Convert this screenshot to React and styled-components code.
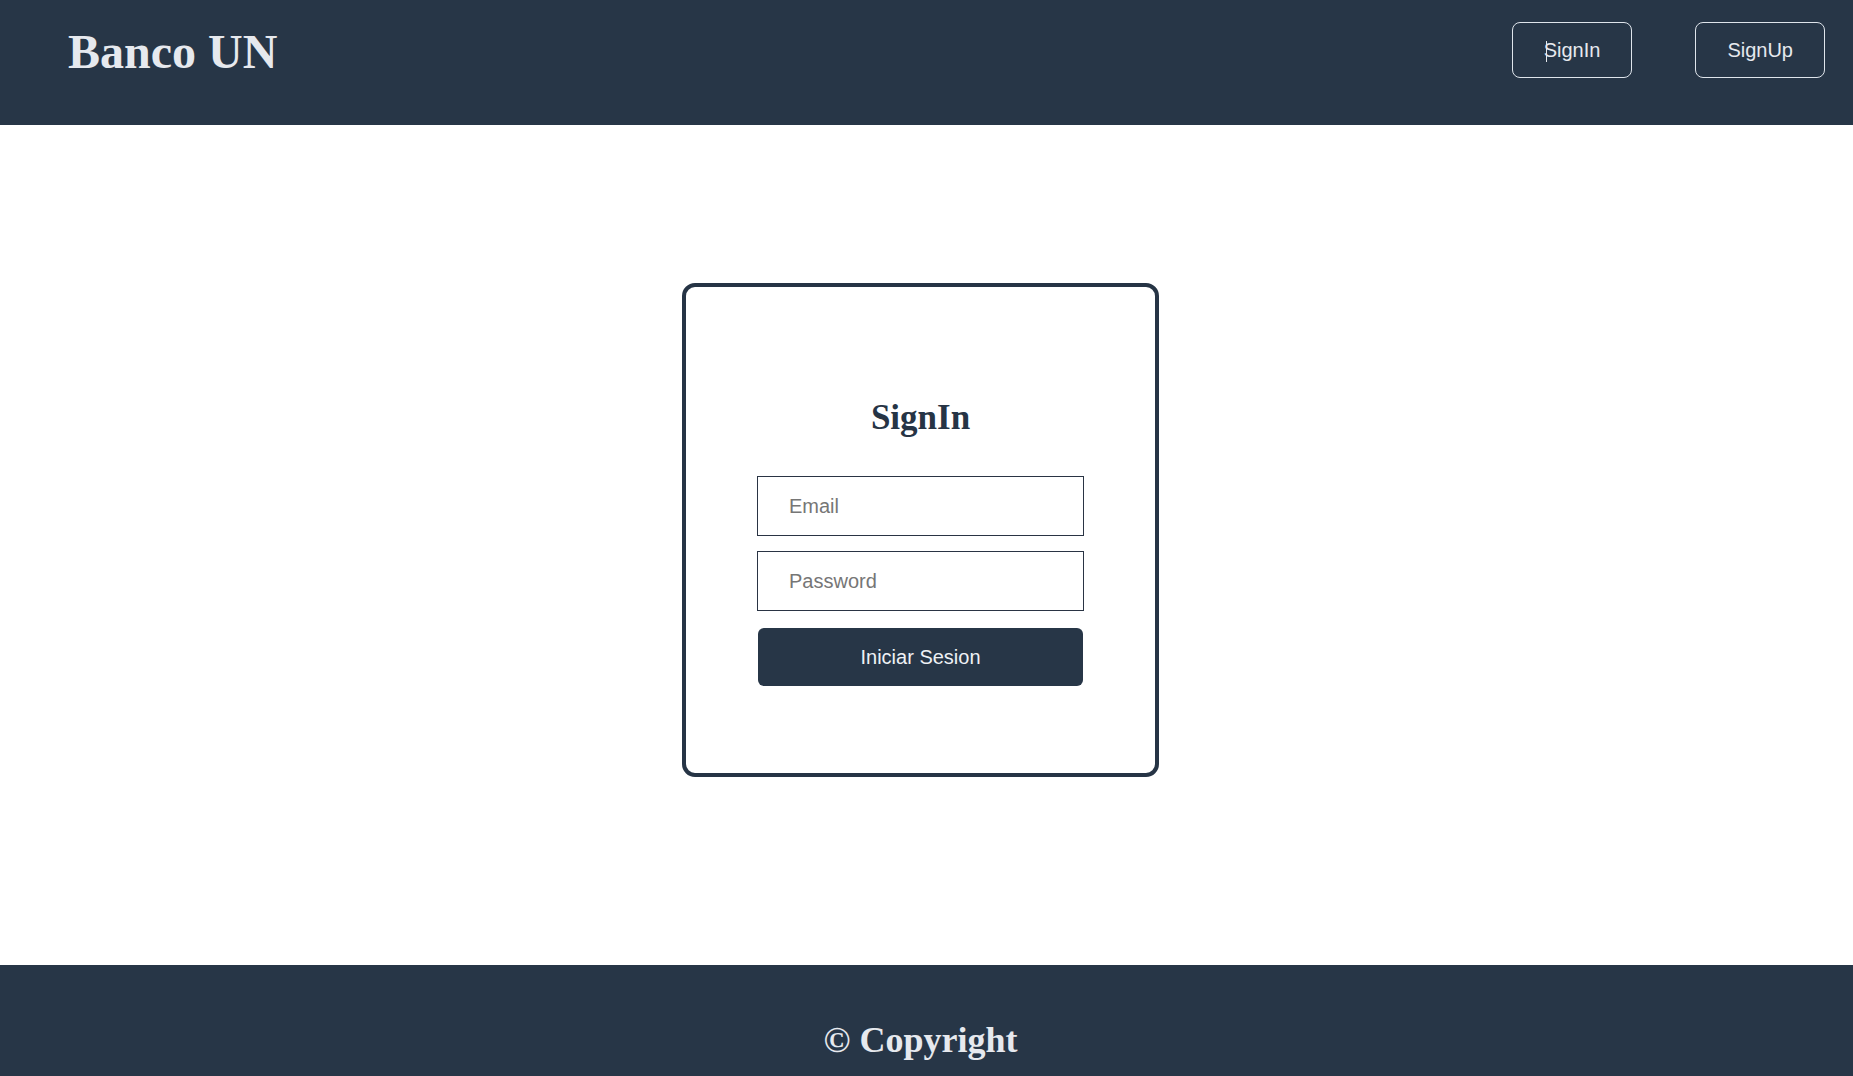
import React from "react";
import styled, { createGlobalStyle } from "styled-components";

const GlobalStyle = createGlobalStyle`
  * {
    box-sizing: border-box;
  }
  body {
    margin: 0;
    background: #ffffff;
    font-family: "Liberation Serif", "Times New Roman", serif;
  }
`;

const Page = styled.div`
  min-height: 100vh;
  display: flex;
  flex-direction: column;
`;

const Header = styled.header`
  height: 125px;
  background: #273647;
  display: flex;
  flex-direction: row;
  align-items: flex-start;
  justify-content: space-between;
  padding: 22px 28px 0 68px;
`;

const Brand = styled.h1`
  margin: 0;
  padding-top: 2px;
  font-size: 48px;
  line-height: 56px;
  font-weight: bold;
  color: #e6e9ee;
`;

const Nav = styled.nav`
  display: flex;
  flex-direction: row;
  gap: 63px;
`;

const NavButton = styled.button`
  position: relative;
  height: 56px;
  padding: 0 31px;
  background: transparent;
  border: 1px solid #dfe5ec;
  border-radius: 8px;
  color: #e6e9ee;
  font-family: "Liberation Sans", Arial, sans-serif;
  font-size: 20px;
  cursor: pointer;
`;

const Caret = styled.span`
  position: absolute;
  left: 33px;
  top: 18px;
  width: 1px;
  height: 21px;
  background: #e6e9ee;
`;

const Main = styled.main`
  flex: 1;
  display: flex;
  justify-content: center;
  align-items: flex-start;
  padding: 158px 12px 0 0;
  height: 840px;
`;

const Card = styled.form`
  width: 477px;
  height: 494px;
  border: 4px solid #263445;
  border-radius: 13px;
  display: flex;
  flex-direction: column;
  align-items: center;
  padding-top: 111px;
`;

const CardTitle = styled.h2`
  margin: 0 0 38px;
  font-size: 35px;
  font-weight: bold;
  color: #263445;
`;

const Field = styled.input`
  width: 327px;
  height: 60px;
  border: 1px solid #2a3444;
  padding: 0 31px;
  margin-bottom: ${(p) => p.gap}px;
  font-family: "Liberation Sans", Arial, sans-serif;
  font-size: 20px;
  color: #263445;
  outline: none;

  &::placeholder {
    color: #767676;
  }
`;

const Submit = styled.button`
  width: 325px;
  height: 58px;
  border: none;
  border-radius: 6px;
  background: #273647;
  color: #eef1f5;
  font-family: "Liberation Sans", Arial, sans-serif;
  font-size: 20px;
  cursor: pointer;
`;

const Footer = styled.footer`
  height: 111px;
  background: #273647;
  display: flex;
  justify-content: center;
  padding: 55px 12px 0 0;
`;

const FooterText = styled.h2`
  margin: 0;
  font-size: 36px;
  font-weight: bold;
  line-height: 41px;
  color: #e6e9ee;
`;

const App = () => {
  return (
    <Page>
      <GlobalStyle />
      <Header>
        <Brand>Banco UN</Brand>
        <Nav>
          <NavButton>
            <Caret />
            SignIn
          </NavButton>
          <NavButton>SignUp</NavButton>
        </Nav>
      </Header>
      <Main>
        <Card onSubmit={(e) => e.preventDefault()}>
          <CardTitle>SignIn</CardTitle>
          <Field type="email" placeholder="Email" gap={15} />
          <Field type="password" placeholder="Password" gap={17} />
          <Submit type="submit">Iniciar Sesion</Submit>
        </Card>
      </Main>
      <Footer>
        <FooterText>© Copyright</FooterText>
      </Footer>
    </Page>
  );
};

export default App;
